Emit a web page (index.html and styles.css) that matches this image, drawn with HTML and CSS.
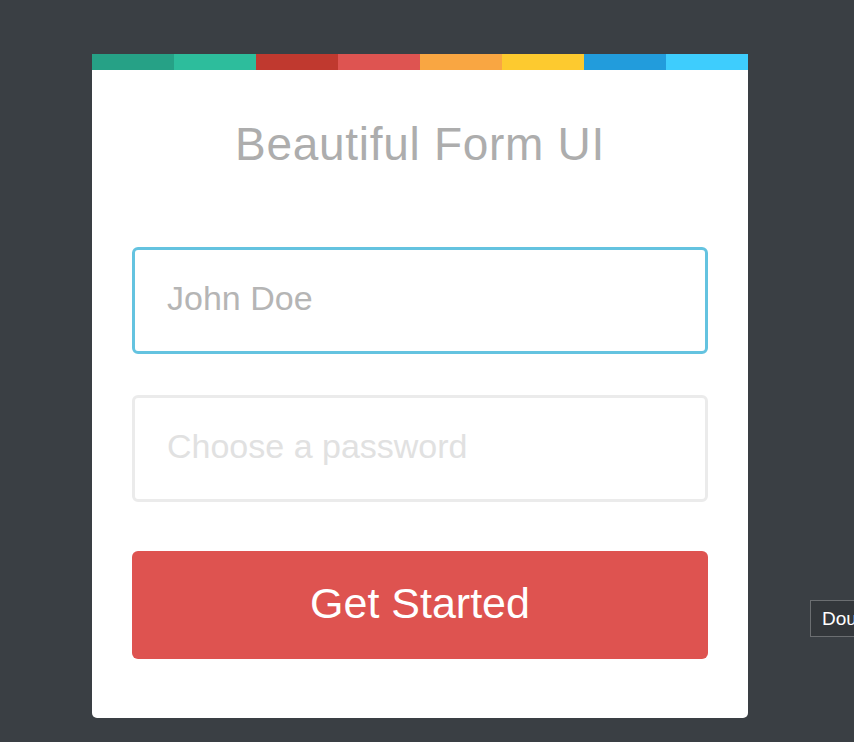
FILE: index.html
```html
<!DOCTYPE html>
<html>
<head>
<meta charset="utf-8">
<link rel="stylesheet" href="styles.css">
</head>
<body>
<div class="card">
  <div class="stripes">
    <span class="s1"></span><span class="s2"></span><span class="s3"></span><span class="s4"></span>
    <span class="s5"></span><span class="s6"></span><span class="s7"></span><span class="s8"></span>
  </div>
  <div class="body">
    <h1 class="title">Beautiful Form UI</h1>
    <div class="field focused">John Doe</div>
    <div class="field muted">Choose a password</div>
    <button class="btn">Get Started</button>
  </div>
</div>
<div class="tooltip">Double</div>
</body>
</html>
```
FILE: styles.css
```css
html, body {
  margin: 0;
  padding: 0;
  background: #3a3f44;
  height: 100%;
  overflow: hidden;
}
body {
  font-family: "Liberation Sans", Arial, sans-serif;
  position: relative;
  padding: 54px 0 0 92px;
  box-sizing: border-box;
}
.card {
  width: 656px;
  background: #fff;
  border-radius: 0 0 5px 5px;
}
.stripes {
  display: flex;
  height: 16px;
}
.stripes span { flex: 1; }
.s1 { background: #26a186; }
.s2 { background: #2dbd9c; }
.s3 { background: #c0392f; }
.s4 { background: #de5451; }
.s5 { background: #f9a642; }
.s6 { background: #fdca2f; }
.s7 { background: #229cdc; }
.s8 { background: #3ecdfd; }
.body {
  padding: 49px 40px 59px;
  display: flex;
  flex-direction: column;
}
.title {
  margin: 0 0 78px;
  font-weight: normal;
  font-size: 46px;
  line-height: 50px;
  text-align: center;
  color: #adadad;
  letter-spacing: 0.7px;
}
.field {
  height: 107px;
  box-sizing: border-box;
  border: 3px solid #ebebeb;
  border-radius: 6px;
  padding: 0 32px 4px;
  display: flex;
  align-items: center;
  font-size: 34px;
  color: #e1e1e1;
}
.field.focused {
  border-color: #64c3e0;
  color: #b5b5b5;
  margin-bottom: 41px;
}
.btn {
  margin-top: 49px;
  height: 108px;
  border: none;
  border-radius: 6px;
  background: #de5350;
  color: #fff;
  font-family: "Liberation Sans", Arial, sans-serif;
  font-size: 43px;
  padding: 0 0 4px;
}
.tooltip {
  position: absolute;
  left: 810px;
  top: 600px;
  height: 37px;
  box-sizing: border-box;
  padding: 0 11px;
  border: 1px solid #6b6e71;
  background: #33373b;
  color: #fff;
  font-size: 19px;
  line-height: 35px;
  white-space: nowrap;
}
```
